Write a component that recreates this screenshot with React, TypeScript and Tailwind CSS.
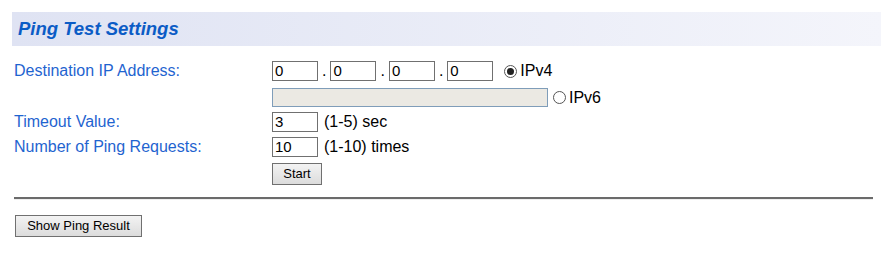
import React from 'react';

const font = { fontFamily: '"Liberation Sans", Arial, sans-serif' };

function Box({ value, w = 'w-[46px]' }: { value: string; w?: string }) {
  return (
    <div className={`${w} h-[20px] border border-[#707070] bg-white px-[2px] text-[15px] leading-[18px] text-black`}>
      {value}
    </div>
  );
}

function Radio({ checked }: { checked?: boolean }) {
  return (
    <span className="flex h-[13px] w-[13px] items-center justify-center rounded-full border border-[#555] bg-white">
      {checked && <span className="h-[7px] w-[7px] rounded-full bg-[#222]" />}
    </span>
  );
}

function Btn({ label, w }: { label: string; w: string }) {
  return (
    <button className={`${w} h-[22px] border border-[#707070] bg-gradient-to-b from-[#f3f3f3] to-[#dcdcdc] text-[13px] text-black`}>
      {label}
    </button>
  );
}

export default function App() {
  return (
    <div className="h-[266px] w-[890px] bg-white pt-[12px]" style={font}>
      {/* header band */}
      <div className="mx-[12px] flex h-[34px] w-[869px] items-center bg-gradient-to-r from-[#dfe3f3] to-[#f4f5fb] pl-[6px]">
        <h1 className="text-[18.5px] font-bold italic text-[#0b5cc6]">Ping Test Settings</h1>
      </div>

      <div className="mt-[15px] flex flex-col pl-[14px] text-[16px] leading-[20px]">
        <div className="flex h-[20px] items-center">
          <span className="w-[258px] text-[#1f64d0]">Destination IP Address:</span>
          <div className="flex items-center">
            <Box value="0" />
            <span className="mx-[4px]">.</span>
            <Box value="0" />
            <span className="mx-[4px]">.</span>
            <Box value="0" />
            <span className="mx-[4px]">.</span>
            <Box value="0" />
            <span className="ml-[11px] mr-[3px]"><Radio checked /></span>
            <span className="text-black">IPv4</span>
          </div>
        </div>

        <div className="mt-[7px] flex h-[19px] items-center">
          <span className="w-[258px]" />
          <div className="h-[19px] w-[276px] border border-[#7f9db9] bg-[#ebe9e3]" />
          <span className="ml-[5px] mr-[3px]"><Radio /></span>
          <span className="text-black">IPv6</span>
        </div>

        <div className="mt-[5px] flex h-[20px] items-center">
          <span className="w-[258px] text-[#1f64d0]">Timeout Value:</span>
          <Box value="3" />
          <span className="ml-[6px] text-black">(1-5) sec</span>
        </div>

        <div className="mt-[5px] flex h-[20px] items-center">
          <span className="w-[258px] text-[#1f64d0]">Number of Ping Requests:</span>
          <Box value="10" />
          <span className="ml-[6px] text-black">(1-10) times</span>
        </div>

        <div className="mt-[6px] flex">
          <span className="w-[258px]" />
          <Btn label="Start" w="w-[50px]" />
        </div>
      </div>

      <div className="ml-[14px] mt-[12px] w-[859px] border-t-2 border-b border-t-[#6b6b6b] border-b-[#eeeeee]" />

      <div className="ml-[15px] mt-[15px] flex">
        <Btn label="Show Ping Result" w="w-[127px]" />
      </div>
    </div>
  );
}
